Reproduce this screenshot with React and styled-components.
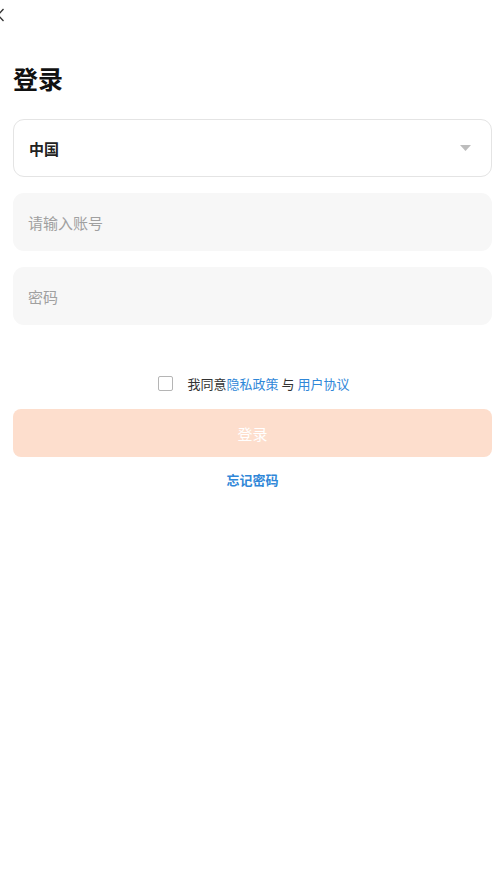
import React, { useState } from 'react';
import styled, { createGlobalStyle } from 'styled-components';

const GlobalStyle = createGlobalStyle`
  body {
    margin: 0;
    background: #fff;
    font-family: "Noto Sans CJK SC", "Noto Sans", sans-serif;
  }
`;

const Page = styled.div`
  width: 493px;
  height: 883px;
  padding: 0 1px 0 13px;
  box-sizing: border-box;
  background: #fff;
  display: flex;
  flex-direction: column;
`;

const TopBar = styled.div`
  height: 30px;
  margin-left: -17px;
  display: flex;
  align-items: center;
`;

const Title = styled.h1`
  margin: 32px 0 25px;
  font-size: 25px;
  font-weight: 700;
  color: #111;
  line-height: 32px;
`;

const Field = styled.div`
  height: 58px;
  border-radius: 11px;
  box-sizing: border-box;
  display: flex;
  align-items: center;
  justify-content: space-between;
  padding: 0 20px 0 15px;
  margin-bottom: 16px;
  border: ${(p) => (p.$outlined ? '1px solid #e4e4e4' : 'none')};
  background: ${(p) => (p.$outlined ? '#fff' : '#f7f7f7')};
`;

const FieldText = styled.span`
  font-size: 15px;
  font-weight: ${(p) => (p.$bold ? 700 : 400)};
  color: ${(p) => (p.$bold ? '#222' : '#a0a0a0')};
`;

const Agreement = styled.label`
  margin-top: 33px;
  padding-left: 2px;
  display: flex;
  align-items: center;
  justify-content: center;
  gap: 15px;
  font-size: 13px;
  color: #333;
  height: 18px;
`;

const Box = styled.span`
  width: 13px;
  height: 13px;
  border: 1px solid #b5b5b5;
  border-radius: 2px;
  background: #fff;
`;

const Link = styled.span`
  color: #2f87d8;
`;

const LoginButton = styled.button`
  margin-top: 17px;
  height: 48px;
  border: none;
  border-radius: 8px;
  background: #fddecd;
  color: #fff;
  font-size: 15px;
  font-family: inherit;
`;

const Forgot = styled.div`
  margin-top: 13px;
  text-align: center;
  font-size: 13px;
  font-weight: 700;
  color: #2f87d8;
`;

const App = () => {
  const [agreed] = useState(false);
  return (
    <>
      <GlobalStyle />
      <Page>
        <TopBar>
          <svg width="10" height="14" viewBox="0 0 10 14">
            <path d="M7.5 1 L2 7 L7.5 13" fill="none" stroke="#333" strokeWidth="1.3" />
          </svg>
        </TopBar>
        <Title>登录</Title>
        <Field $outlined>
          <FieldText $bold>中国</FieldText>
          <svg width="11" height="6" viewBox="0 0 11 6">
            <path d="M0 0 H11 L5.5 6 Z" fill="#bdbdbd" />
          </svg>
        </Field>
        <Field>
          <FieldText>请输入账号</FieldText>
        </Field>
        <Field>
          <FieldText>密码</FieldText>
        </Field>
        <Agreement>
          <Box data-checked={agreed} />
          <span>
            我同意<Link>隐私政策</Link> 与 <Link>用户协议</Link>
          </span>
        </Agreement>
        <LoginButton>登录</LoginButton>
        <Forgot>忘记密码</Forgot>
      </Page>
    </>
  );
};

export default App;
